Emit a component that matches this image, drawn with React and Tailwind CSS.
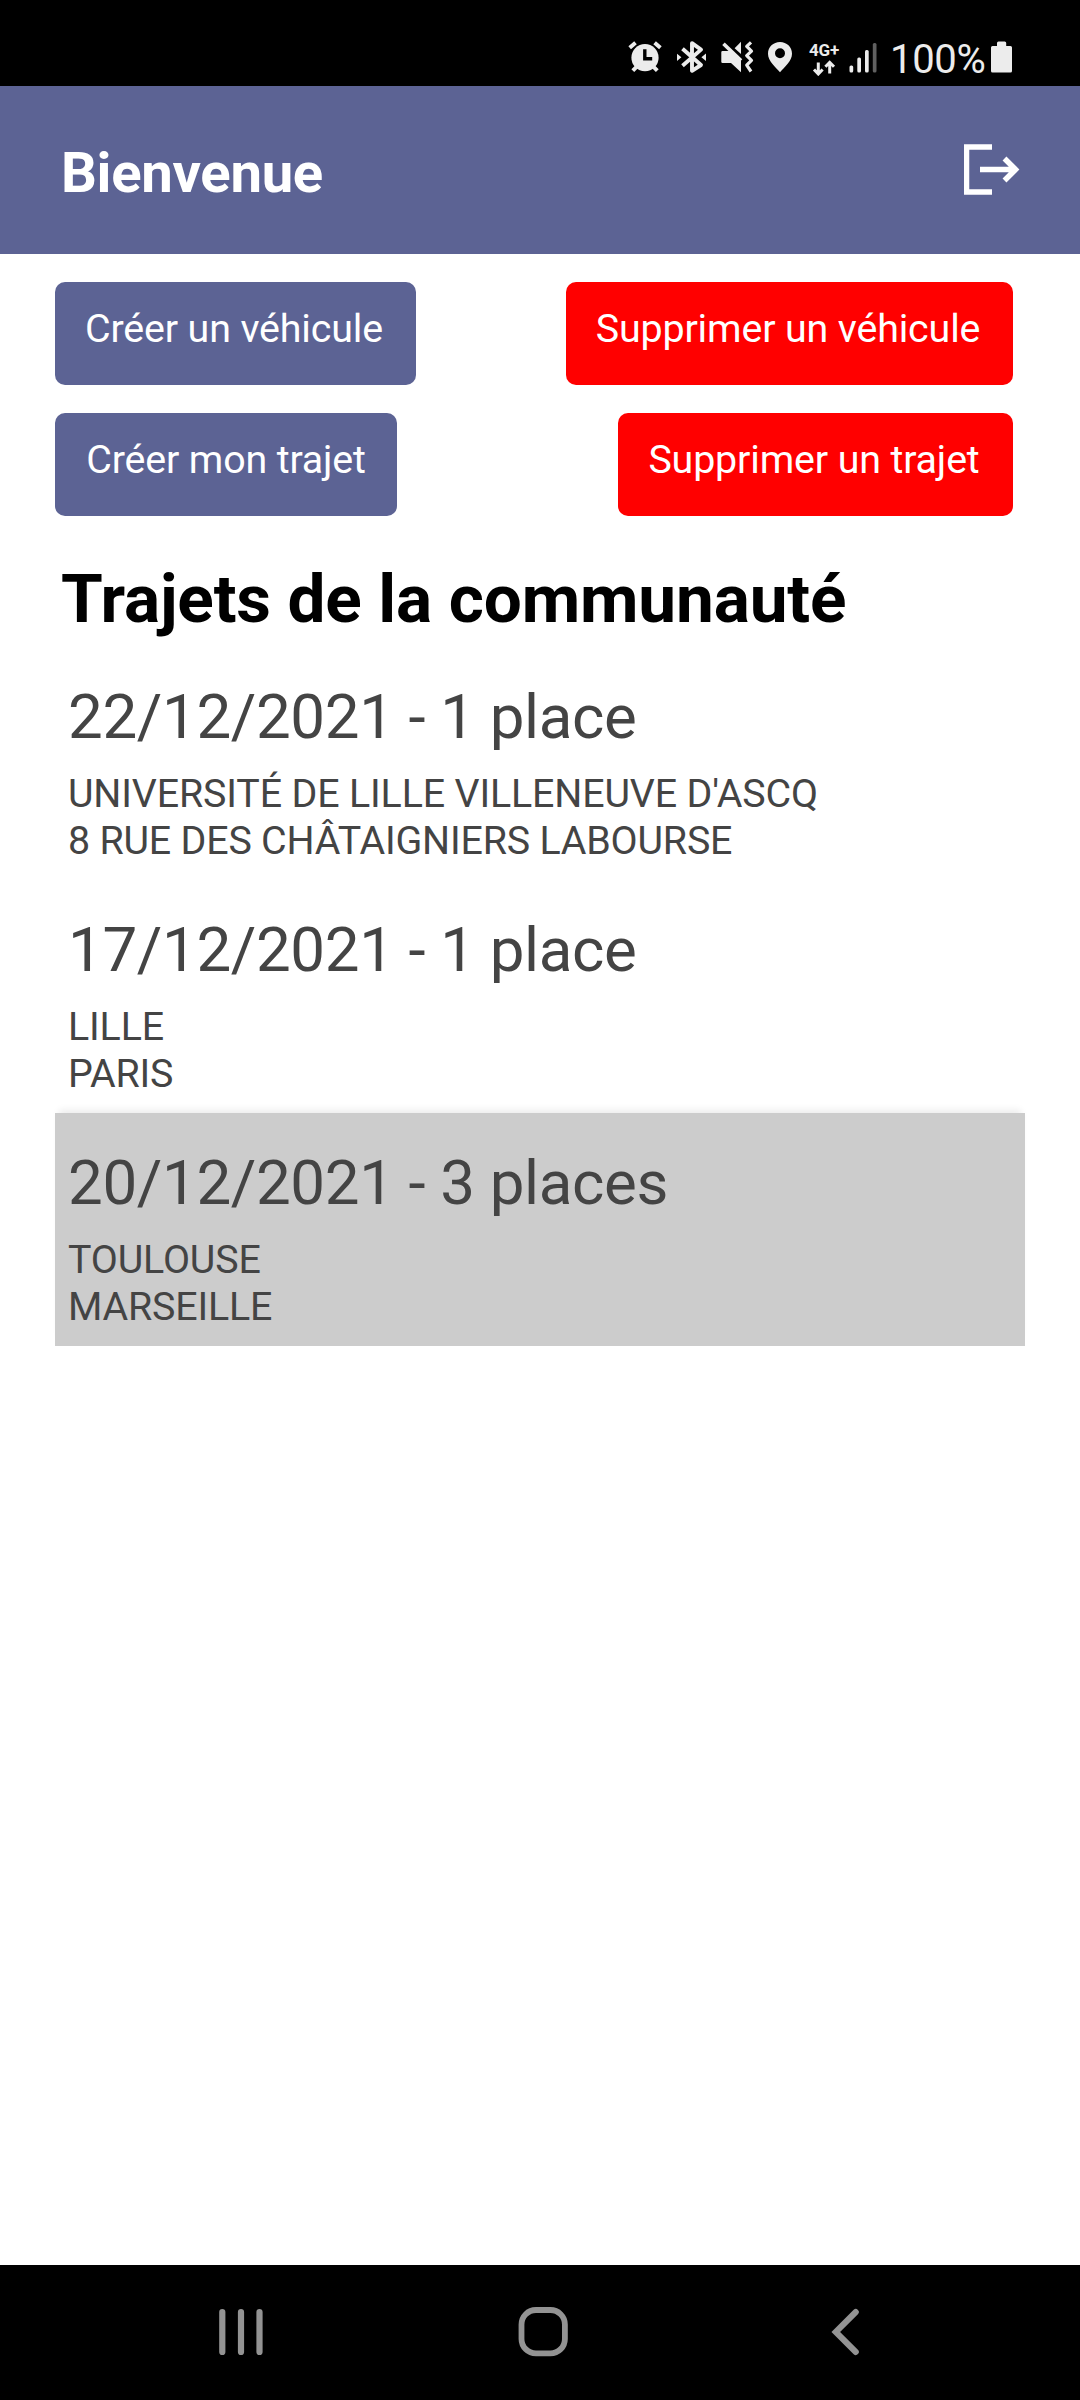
const trips = [
  { title: "22/12/2021 - 1 place", from: "UNIVERSITÉ DE LILLE VILLENEUVE D'ASCQ", to: "8 RUE DES CHÂTAIGNIERS LABOURSE" },
  { title: "17/12/2021 - 1 place", from: "LILLE", to: "PARIS" },
  { title: "20/12/2021 - 3 places", from: "TOULOUSE", to: "MARSEILLE", selected: true },
];

function StatusBar() {
  return (
    <div className="flex h-[86px] items-start bg-black pt-[40px] pl-[628px] text-[#ececec]">
      <svg className="h-[34px] w-[34px] shrink-0" viewBox="628 40 34 34" fill="none" stroke="currentColor" strokeWidth="4">
        <circle cx="645" cy="57.7" r="13.6" fill="currentColor" stroke="none" />
        <path d="M629.7 47.7l5.8-4.9M654.6 42.8l5.8 4.9M632.8 70.6l5-5M657.3 70.6l-5-5" />
        <path d="M644.8 49.3v9.4h7.4" stroke="black" strokeWidth="3.4" />
      </svg>
      <svg className="ml-[14px] h-[34px] w-[31px] shrink-0" viewBox="676 40 31 34" fill="none">
        <path d="M682.5 48.8L701 65L692 70.8V43.2L701 49.6L682.5 65.8" stroke="currentColor" strokeWidth="3.9" strokeLinejoin="round" />
        <path d="M677 53.7l4.4 3.6-4.4 3.6zM706 53.5l-4.6 3.8 4.6 3.6z" fill="currentColor" />
      </svg>
      <svg className="ml-[14px] h-[34px] w-[33px] shrink-0" viewBox="721 40 33 34" fill="currentColor">
        <path d="M722.5 51h7.2l11.3 9.5v11.7l-10-9.2h-8.5q-1.2 0-1.2-1.2v-9.6q0-1.2 1.2-1.2z" />
        <path d="M734.6 48.3l6.4-6.5v12.3z" />
        <path d="M723.5 43.8L741 60.6" stroke="currentColor" strokeWidth="3.6" />
        <path d="M751 42.3l-4.3 4 4.8 4.8-4.8 4.6 4.8 4.7-4.8 4.7 4.3 6.4" fill="none" stroke="currentColor" strokeWidth="3.2" strokeLinejoin="round" />
      </svg>
      <svg className="ml-[13px] h-[34px] w-[26px] shrink-0" viewBox="767 40 26 34" fill="currentColor">
        <path fillRule="evenodd" d="M780 42c6.700 0 12 5 12 11.700C792 61 784.500 67 780 72.200C775.500 67 768 61 768 53.700C768 47 773.300 42 780 42zM780 48.300a5 5 0 1 0 0 10a5 5 0 1 0 0-10z" />
      </svg>
      <div className="ml-[16px] flex w-[32px] shrink-0 flex-col">
        <span className="h-[20px] text-[17px] leading-[20px] font-bold tracking-[-0.2px]">4G+</span>
        <svg className="h-[16px] w-[32px]" viewBox="809 59 32 16" fill="none" stroke="currentColor" strokeWidth="3">
          <path d="M818.300 61.500V73M814 68.500l4.300 4.500 4.300-4.500M829.700 72.500V61.500M825.400 65.800l4.300-4.500 4.300 4.500" />
        </svg>
      </div>
      <svg className="ml-[7px] h-[34px] w-[30px] shrink-0" viewBox="848 40 30 34" fill="currentColor">
        <rect x="849.500" y="65.500" width="3.700" height="7" rx="1.500" />
        <rect x="857.300" y="57.500" width="3.700" height="15" rx="1.500" />
        <rect x="865" y="50" width="3.700" height="22.500" rx="1.500" />
        <rect x="872.800" y="43" width="3.700" height="29.500" rx="1.500" fill="#606060" />
      </svg>
      <span className="ml-[12px] w-[101px] shrink-0 text-[40px] leading-[39px] tracking-[-0.3px] whitespace-nowrap">100%</span>
      <svg className="h-[34px] w-[22px] shrink-0" viewBox="991 40 22 34" fill="currentColor">
        <path d="M997 46v-3q0-1.500 1.500-1.500h6.200q1.500 0 1.500 1.500v3h4.300q1.500 0 1.500 1.500v23.500q0 1.500-1.500 1.500h-18q-1.500 0-1.500-1.500v-23.500q0-1.500 1.500-1.500z" />
      </svg>
    </div>
  );
}

function ActionButton({ danger, className, children }) {
  return (
    <button
      className={`h-[103px] rounded-[10px] pb-[10px] text-center text-[39.375px] leading-[47px] tracking-[-0.14px] whitespace-nowrap text-white ${danger ? "bg-[#ff0000]" : "bg-[#5c6394]"} ${className}`}
    >
      {children}
    </button>
  );
}

function TripRow({ trip }) {
  return (
    <li className={`h-[233px] px-[13px] pt-[34px] text-[#444444] ${trip.selected ? "bg-[#cccccc] shadow-[0_-7px_7px_-4px_rgba(0,0,0,0.08)]" : ""}`}>
      <h2 className="text-[61.875px] leading-[73px] tracking-[-0.36px]">{trip.title}</h2>
      <p className="mt-[16px] text-[39.375px] leading-[47px] tracking-[-0.15px]">{trip.from}</p>
      <p className="text-[39.375px] leading-[47px] tracking-[-0.2px]">{trip.to}</p>
    </li>
  );
}

export default function App() {
  return (
    <div className="flex h-[2400px] w-[1080px] flex-col overflow-hidden bg-white font-['Roboto',sans-serif]">
      <StatusBar />
      <header className="flex h-[168px] items-center justify-between bg-[#5c6394] pr-[60px] pl-[61px] text-white">
        <h1 className="pt-[5px] text-[56.25px] leading-[66px] font-bold tracking-[-0.3px]">Bienvenue</h1>
        <svg className="h-[52px] w-[56px]" viewBox="964 144 56 52" fill="none" stroke="currentColor">
          <path d="M992 147H966.500V192H992" strokeWidth="5.500" />
          <path d="M980 169.500H1016M1004.500 158.500L1015.500 169.500L1004.500 180.500" strokeWidth="5.500" />
        </svg>
      </header>
      <main className="flex-1 pt-[28px] pl-[55px]">
        <div className="flex w-[958px] flex-col gap-[28px]">
          <div className="flex justify-between">
            <ActionButton className="w-[361px] pr-[3px]">Créer un véhicule</ActionButton>
            <ActionButton danger className="w-[447px] pr-[3px]">Supprimer un véhicule</ActionButton>
          </div>
          <div className="flex justify-between">
            <ActionButton className="w-[342px]">Créer mon trajet</ActionButton>
            <ActionButton danger className="w-[395px] pr-[3px]">Supprimer un trajet</ActionButton>
          </div>
        </div>
        <h1 className="mt-[43px] pl-[6px] text-[67.5px] leading-[79px] font-bold tracking-[-0.14px] text-black">Trajets de la communauté</h1>
        <ul className="mt-[9px] w-[970px]">
          {trips.map((trip) => (
            <TripRow key={trip.title} trip={trip} />
          ))}
        </ul>
      </main>
      <nav className="flex h-[135px] items-start bg-black pt-[41px] pl-[219px] text-[#939393]">
        <svg className="h-[52px] w-[44px]" viewBox="219 2306 44 52" fill="none" stroke="currentColor" strokeWidth="6.200" strokeLinecap="round">
          <path d="M222.300 2312v40M241 2312v40M259.500 2312v40" />
        </svg>
        <svg className="ml-[255px] h-[52px] w-[52px]" viewBox="518 2306 52 52" fill="none" stroke="currentColor" strokeWidth="5.800">
          <rect x="521.500" y="2310" width="43.400" height="43.400" rx="14.500" />
        </svg>
        <svg className="ml-[260px] h-[52px] w-[30px]" viewBox="830 2306 30 52" fill="none" stroke="currentColor" strokeWidth="6" strokeLinecap="round">
          <path d="M855.800 2312L835.700 2332L855.800 2352" />
        </svg>
      </nav>
    </div>
  );
}
